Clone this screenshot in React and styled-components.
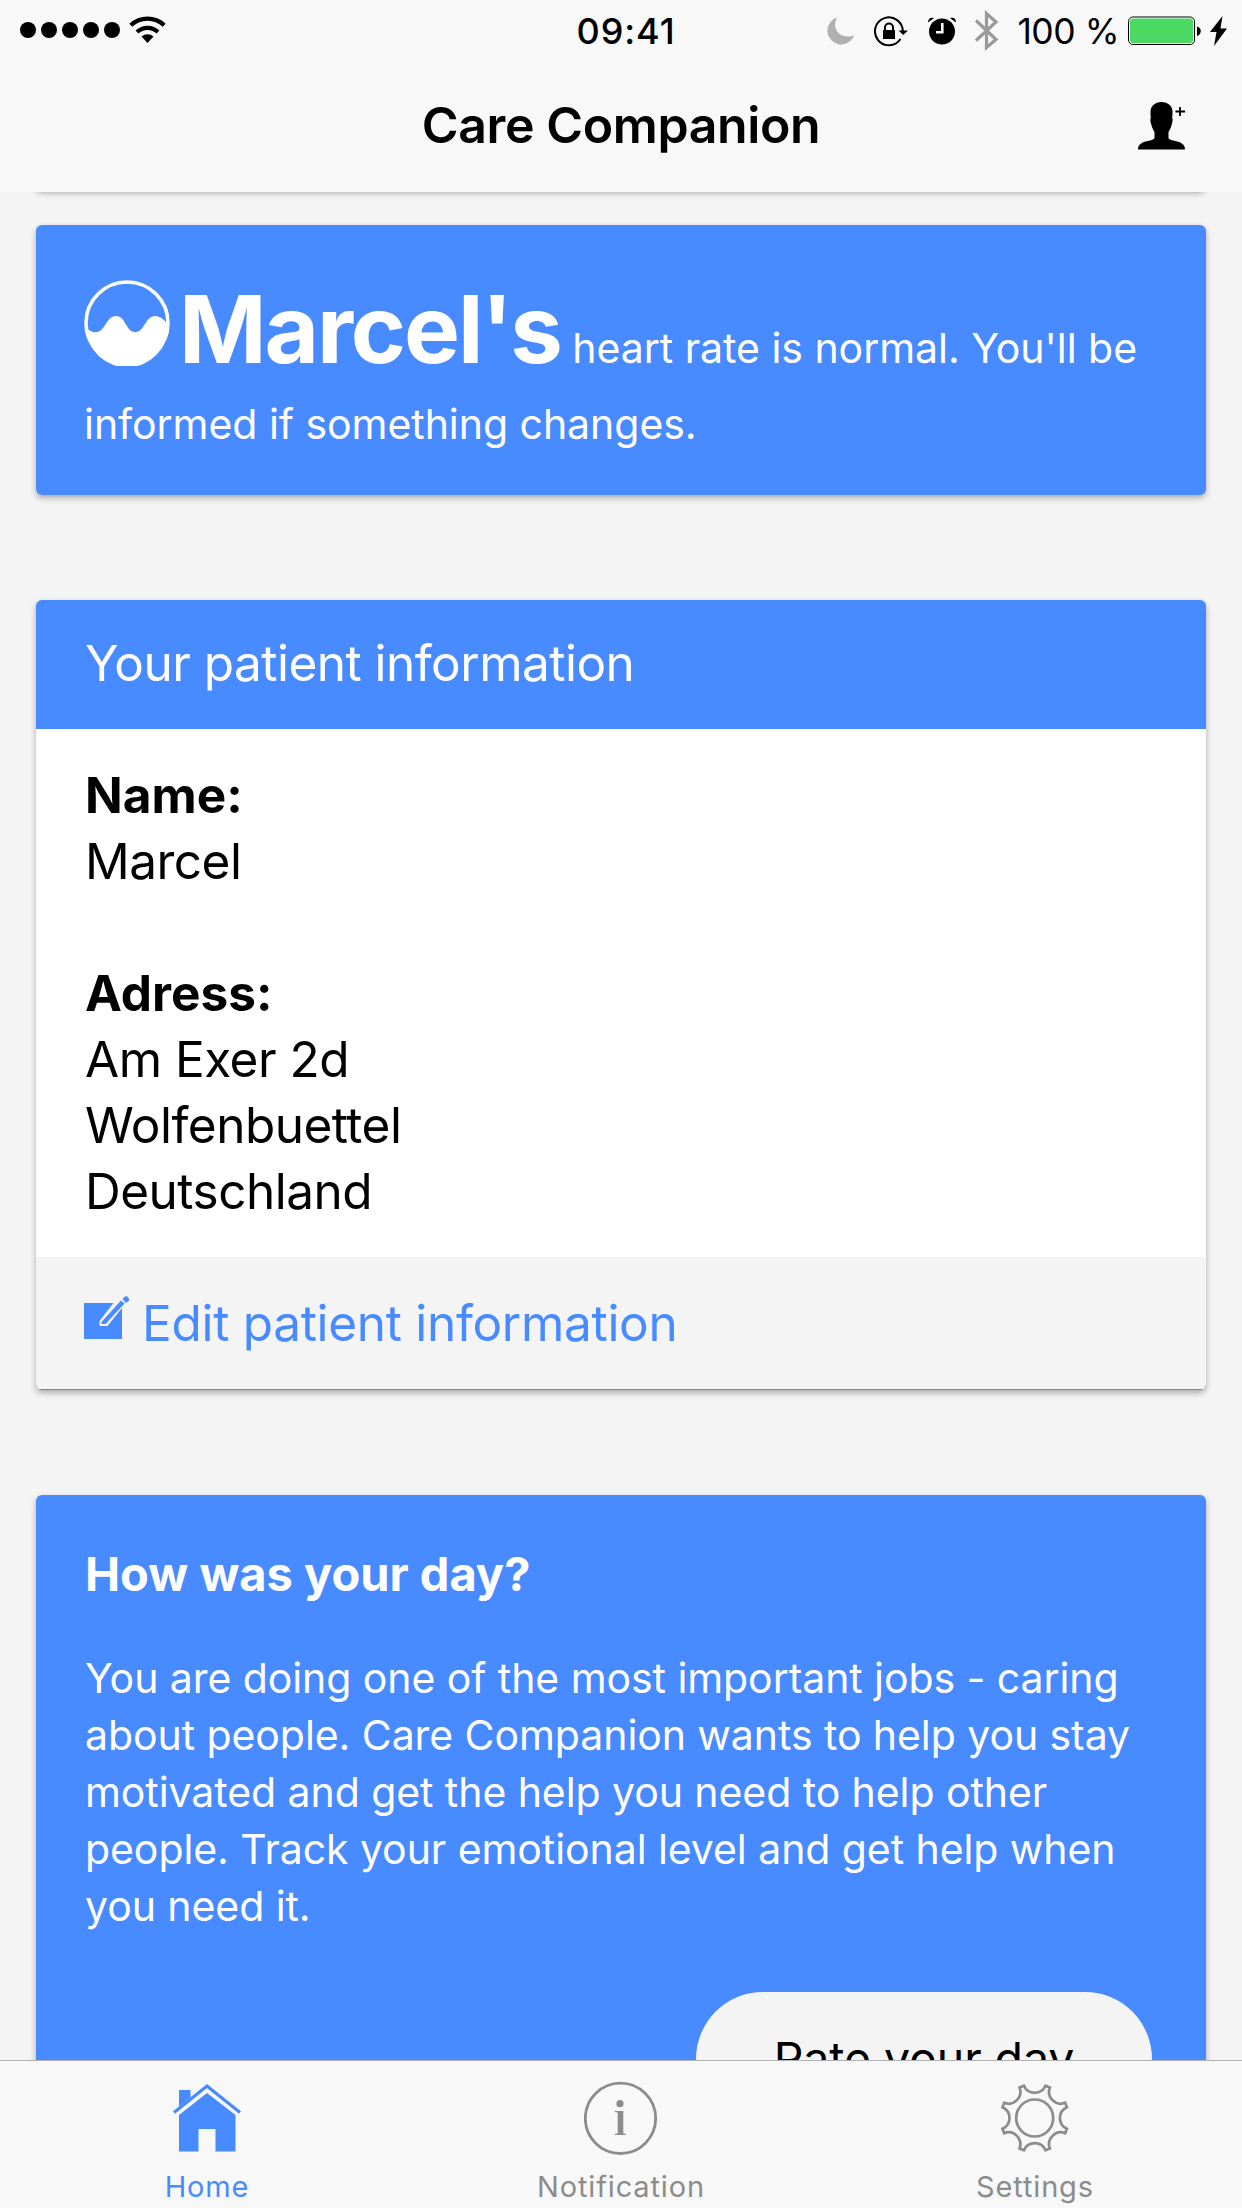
import React from "react";
import styled, { createGlobalStyle } from "styled-components";

const GlobalStyle = createGlobalStyle`
  * {
    box-sizing: border-box;
  }

  body {
    margin: 0;
    font-family: Inter, "Liberation Sans", sans-serif;
    background-color: #f4f4f4;
    color: #000;
  }

  svg {
    display: block;
    flex: none;
  }
`;

// Whole screen: header on top, scroll area between, tabs at the bottom.
const Screen = styled.div`
  display: flex;
  flex-direction: column;
  width: 1242px;
  height: 2208px;
  overflow: hidden;
`;

const Header = styled.header`
  flex: none;
  height: 192px;
  background-color: #f8f8f8;
`;

const StatusBar = styled.div`
  display: grid;
  grid-template-columns: 1fr auto 1fr;
  align-items: center;
  height: 60px;
  padding: 2px 15px 0 20px;
`;

const StatusGroup = styled.div`
  display: flex;
  align-items: center;
  justify-content: ${(props) => (props.$end ? "flex-end" : "flex-start")};
`;

const StatusIcons = styled.div`
  display: flex;
  align-items: center;
  gap: 19px;
`;

const Clock = styled.span`
  margin-left: 5px;
  font-size: 36px;
  font-weight: 550;
  letter-spacing: 0.9px;
`;

const BatteryText = styled.span`
  margin: 0 9px 0 18px;
  font-size: 35.5px;
  letter-spacing: -0.5px;
  white-space: pre;
`;

const Toolbar = styled.div`
  display: grid;
  grid-template-columns: 1fr auto 1fr;
  align-items: center;
  height: 132px;
  padding: 0 57px;
`;

const Title = styled.h1`
  grid-column: 2;
  margin: 0 0 1px;
  font-size: 50px;
  font-weight: 600;
  line-height: 131px;
  letter-spacing: -0.4px;
`;

const ProfileButton = styled.button`
  justify-self: end;
  border: none;
  padding: 0;
  background: none;
`;

const Content = styled.main`
  flex: 1;
  min-height: 0;
  overflow: hidden;
  padding: 0 36px;
`;

const Card = styled.section`
  margin-bottom: 105px;
  border-radius: 6px;
  overflow: hidden;
  background-color: #488aff;
  color: #fff;
  box-shadow: 0 3px 6px rgba(0, 0, 0, 0.3);
`;

// Lower edge of the card that is scrolled under the header.
const ScrolledCard = styled(Card)`
  height: 20px;
  margin-top: -22px;
  margin-bottom: 35px;
`;

const StatusCard = styled(Card)`
  height: 270px;
  padding: 47px 48px 0;
`;

const StatusText = styled.p`
  margin: 0;
  font-size: 41px;
  line-height: 74px;
  letter-spacing: -0.04px;
  white-space: nowrap;
`;

const PatientName = styled.strong`
  font-size: 94px;
  font-weight: 700;
  line-height: 115px;
  letter-spacing: -2.1px;
`;

const WaveIcon = styled.svg`
  display: inline-block;
  margin-right: 9px;
  vertical-align: -3px;
`;

const CardHeader = styled.h2`
  margin: 0;
  height: 129px;
  padding: 0 49px;
  font-size: 49.5px;
  font-weight: 400;
  line-height: 127px;
  letter-spacing: -0.52px;
`;

const CardBody = styled.div`
  height: 528px;
  padding: 33px 49px;
  background-color: #fff;
  color: #000;
  font-size: 49.5px;
  line-height: 66px;
`;

const Field = styled.div`
  margin-bottom: 66px;
`;

const FieldLine = styled.div`
  font-weight: ${(props) => (props.$label ? 700 : 400)};
  letter-spacing: ${(props) => (props.$label ? "0" : "-0.5px")};
`;

const CardFooter = styled.div`
  display: flex;
  align-items: center;
  height: 132px;
  padding: 0 48px;
  margin-bottom: 1px;
  background-color: #f4f4f4;
  color: #488aff;
  font-size: 49.5px;
`;

const EditMark = styled.svg`
  margin-bottom: 10px;
`;

const EditLabel = styled.span`
  margin-left: 12px;
  letter-spacing: -0.3px;
`;

const DayCard = styled(Card)`
  height: 700px;
  padding: 46px 54px 0 49px;
`;

const DayTitle = styled.h2`
  margin: 0 0 43px;
  font-size: 47px;
  font-weight: 700;
  line-height: 66px;
`;

const DayText = styled.p`
  margin: 0 0 57px;
  font-size: 41px;
  line-height: 57px;
  letter-spacing: -0.07px;
  white-space: nowrap;
`;

const RateButton = styled.button`
  display: block;
  width: 456px;
  height: 134px;
  margin-left: auto;
  border: none;
  border-radius: 67px;
  background-color: #f4f4f4;
  color: #000;
  font-family: inherit;
  font-size: 46.5px;
  letter-spacing: -0.1px;
`;

const TabBar = styled.nav`
  display: grid;
  grid-template-columns: repeat(3, 1fr);
  flex: none;
  height: 148px;
  border-top: 1px solid #b2b2b2;
  background-color: #f8f8f8;
`;

const Tab = styled.a`
  display: flex;
  flex-direction: column;
  align-items: center;
  padding-top: 17px;
  color: ${(props) => (props.$active ? "#488aff" : "#8c8c8c")};
  font-size: 29px;
  line-height: 36px;
`;

const TabLabel = styled.span`
  margin-top: 13px;
  letter-spacing: 0.85px;
`;

const TABS = [
  { label: "Home", Icon: HomeIcon, active: true },
  { label: "Notification", Icon: InfoIcon },
  { label: "Settings", Icon: GearIcon },
];

function SignalIcon() {
  return (
    <svg width="146" height="30" viewBox="0 0 146 30">
      {[8, 29, 50, 71, 92].map((cx) => (
        <circle key={cx} cx={cx} cy="14" r="8" />
      ))}
      <g fill="none" stroke="#000" strokeWidth="4.2">
        <path d="M110.8 9.2a24.5 24.5 0 0 1 33.4 0" />
        <path d="M117 16a15.4 15.4 0 0 1 21 0" />
      </g>
      <path d="M121.5 20.5a8.8 8.8 0 0 1 12 0l-6 6.5z" />
    </svg>
  );
}

function MoonIcon() {
  return (
    <svg width="28" height="28" viewBox="0 0 28 28" fill="#b0b0b0">
      <path d="M10 0.5A13.8 13.8 0 1 0 27.3 18C17 23 3 15 10 .5z" />
    </svg>
  );
}

function LockIcon() {
  return (
    <svg width="35" height="31" viewBox="0 0 35 31">
      <path
        d="M28.8 15.5A13.9 13.9 0 1 0 26.5 23"
        fill="none"
        stroke="#000"
        strokeWidth="2"
      />
      <path d="M24.5 14.5h9.5l-4.7 4.5z" />
      <rect x="9" y="14" width="12" height="9" />
      <path d="M11 15v-3.5a4 4 0 0 1 8 0V15" fill="none" stroke="#000" strokeWidth="2" />
    </svg>
  );
}

function AlarmIcon() {
  return (
    <svg width="28" height="28" viewBox="0 0 28 28">
      <circle cx="14" cy="14.5" r="13" />
      <path d="M0 5.5C0 1 3 0 6 1zM28 5.5C28 1 25 0 22 1z" />
      <path d="M14.3 6v9.3H8" fill="none" stroke="#f8f8f8" strokeWidth="2.6" />
    </svg>
  );
}

function BluetoothIcon() {
  return (
    <svg width="24" height="42" viewBox="0 0 24 42" fill="none" stroke="#999" strokeWidth="3.2">
      <path d="M1 10.5L21 29.5 11.500 37.500V3.500L21 12 1 30.5" />
    </svg>
  );
}

function BatteryIcon() {
  return (
    <svg width="73" height="30" viewBox="0 0 73 30">
      <rect x="0.5" y="1" width="66" height="27.5" rx="4.5" fill="#fff" stroke="#000" />
      <rect x="2" y="2.5" width="63" height="24.5" rx="3" fill="#4cd964" />
      <path d="M69 10.5c5 1 5 8 0 9.5z" />
    </svg>
  );
}

const BoltMark = styled.svg`
  margin-left: 9px;
`;

function PersonAddIcon() {
  return (
    <svg width="47" height="48" viewBox="0 0 47 48">
      <path d="M23.5 0C30 0 35 4 34.5 11c0 2-.2 4-.3 5 1 2 .2 4-.4 6-.3 3-1.8 5-3.3 8v6c1 2 5 2.5 9 3.5 5 1.5 7.5 4 7.5 8H0c0-4 2.5-6.5 7.5-8 4-1 8-1.5 9-3.5v-6c-1.5-3-3-5-3.3-8-.6-2-1.4-4-.4-6-.1-1-.3-3-.3-5C12 4 17 0 23.5 0z" />
      <path d="M42 5v9M37.5 9.5h9.5" stroke="#000" strokeWidth="1.8" />
    </svg>
  );
}

function HomeIcon() {
  return (
    <svg width="68" height="78" viewBox="0 0 68 78" fill="#488aff">
      <path d="M1 34.5L34 8l33 26.5" fill="none" stroke="#488aff" strokeWidth="3.2" />
      <path d="M6 12h11.500v7.5L6 28.5zM34 15L62.500 37v36.5H42.500V51h-17v22.500H6V37z" />
    </svg>
  );
}

function InfoIcon() {
  return (
    <svg width="74" height="78" viewBox="0 0 74 78" fill="#8c8c8c">
      <circle cx="36.5" cy="40.3" r="35.2" fill="none" stroke="#8c8c8c" strokeWidth="2.8" />
      <circle cx="36" cy="25.7" r="3.6" />
      <path d="M30.7 33h8.6v22.5l2.7.6V57H30.700v-.9l3-.6V34.600l-3-.5z" />
    </svg>
  );
}

// Eight teeth with round hollows between them.
function GearIcon() {
  const at = (radius, degrees) => {
    const angle = (degrees * Math.PI) / 180;
    return `${(36.7 + radius * Math.cos(angle)).toFixed(2)} ${(40 + radius * Math.sin(angle)).toFixed(2)}`;
  };
  const teeth = Array.from({ length: 8 }, (_, i) => {
    const mid = i * 45 + 22.5;
    return `${i === 0 ? "M" : "L"}${at(34, mid - 4)}L${at(34, mid + 4)}A11.8 11.8 0 0 0 ${at(34, mid + 41)}`;
  }).join("");
  return (
    <svg width="74" height="78" viewBox="0 0 74 78" fill="none" stroke="#8c8c8c" strokeWidth="2.7">
      <path d={`${teeth}Z`} />
      <circle cx="36.7" cy="40" r="18.5" />
    </svg>
  );
}

function App() {
  return (
    <Screen>
      <GlobalStyle />
      <Header>
        <StatusBar>
          <StatusGroup>
            <SignalIcon />
          </StatusGroup>
          <Clock>09:41</Clock>
          <StatusGroup $end>
            <StatusIcons>
              <MoonIcon />
              <LockIcon />
              <AlarmIcon />
              <BluetoothIcon />
            </StatusIcons>
            <BatteryText>100 %</BatteryText>
            <BatteryIcon />
            <BoltMark width="17" height="30" viewBox="0 0 17 30">
              <path d="M12.5 0L0 16h6.5L4 30 17 12.500h-6.500z" />
            </BoltMark>
          </StatusGroup>
        </StatusBar>
        <Toolbar>
          <Title>Care Companion</Title>
          <ProfileButton aria-label="Add person">
            <PersonAddIcon />
          </ProfileButton>
        </Toolbar>
      </Header>

      <Content>
        <ScrolledCard />
        <StatusCard>
          <StatusText>
            <WaveIcon width="86" height="86" viewBox="0 0 86 86">
              <circle cx="43" cy="43" r="41" fill="none" stroke="#fff" strokeWidth="3.6" />
              <path
                d="M2 48C5 50.5 8 52.3 12 52.3 21 52.3 22 36 32 36S42 52.3 51.3 52.3 61 36 71.3 36C76 36 80 39.5 84 44.5A41 41 0 0 1 2 48z"
                fill="#fff"
              />
            </WaveIcon>
            <PatientName>Marcel's</PatientName> heart rate is normal. You'll be
            <br />
            informed if something changes.
          </StatusText>
        </StatusCard>

        <Card>
          <CardHeader>Your patient information</CardHeader>
          <CardBody>
            <Field>
              <FieldLine $label>Name:</FieldLine>
              <FieldLine>Marcel</FieldLine>
            </Field>
            <Field>
              <FieldLine $label>Adress:</FieldLine>
              <FieldLine>Am Exer 2d</FieldLine>
              <FieldLine>Wolfenbuettel</FieldLine>
              <FieldLine>Deutschland</FieldLine>
            </Field>
          </CardBody>
          <CardFooter>
            <EditMark width="46" height="44" viewBox="0 0 46 44" fill="#488aff">
              <path d="M0 7h29.5L15.500 25v5h8L38 12v31H0z" />
              <path d="M17.5 26L37 4.500l3.500 3L21.500 28h-4z" />
              <path d="M38.5 3L41 .5c2-1 5 2 4 4L42 7z" />
            </EditMark>
            <EditLabel>Edit patient information</EditLabel>
          </CardFooter>
        </Card>

        <DayCard>
          <DayTitle>How was your day?</DayTitle>
          <DayText>
            You are doing one of the most important jobs - caring
            <br />
            about people. Care Companion wants to help you stay
            <br />
            motivated and get the help you need to help other
            <br />
            people. Track your emotional level and get help when
            <br />
            you need it.
          </DayText>
          <RateButton>Rate your day</RateButton>
        </DayCard>
      </Content>

      <TabBar>
        {TABS.map(({ label, Icon, active }) => (
          <Tab key={label} $active={active}>
            <Icon />
            <TabLabel>{label}</TabLabel>
          </Tab>
        ))}
      </TabBar>
    </Screen>
  );
}

export default App;
